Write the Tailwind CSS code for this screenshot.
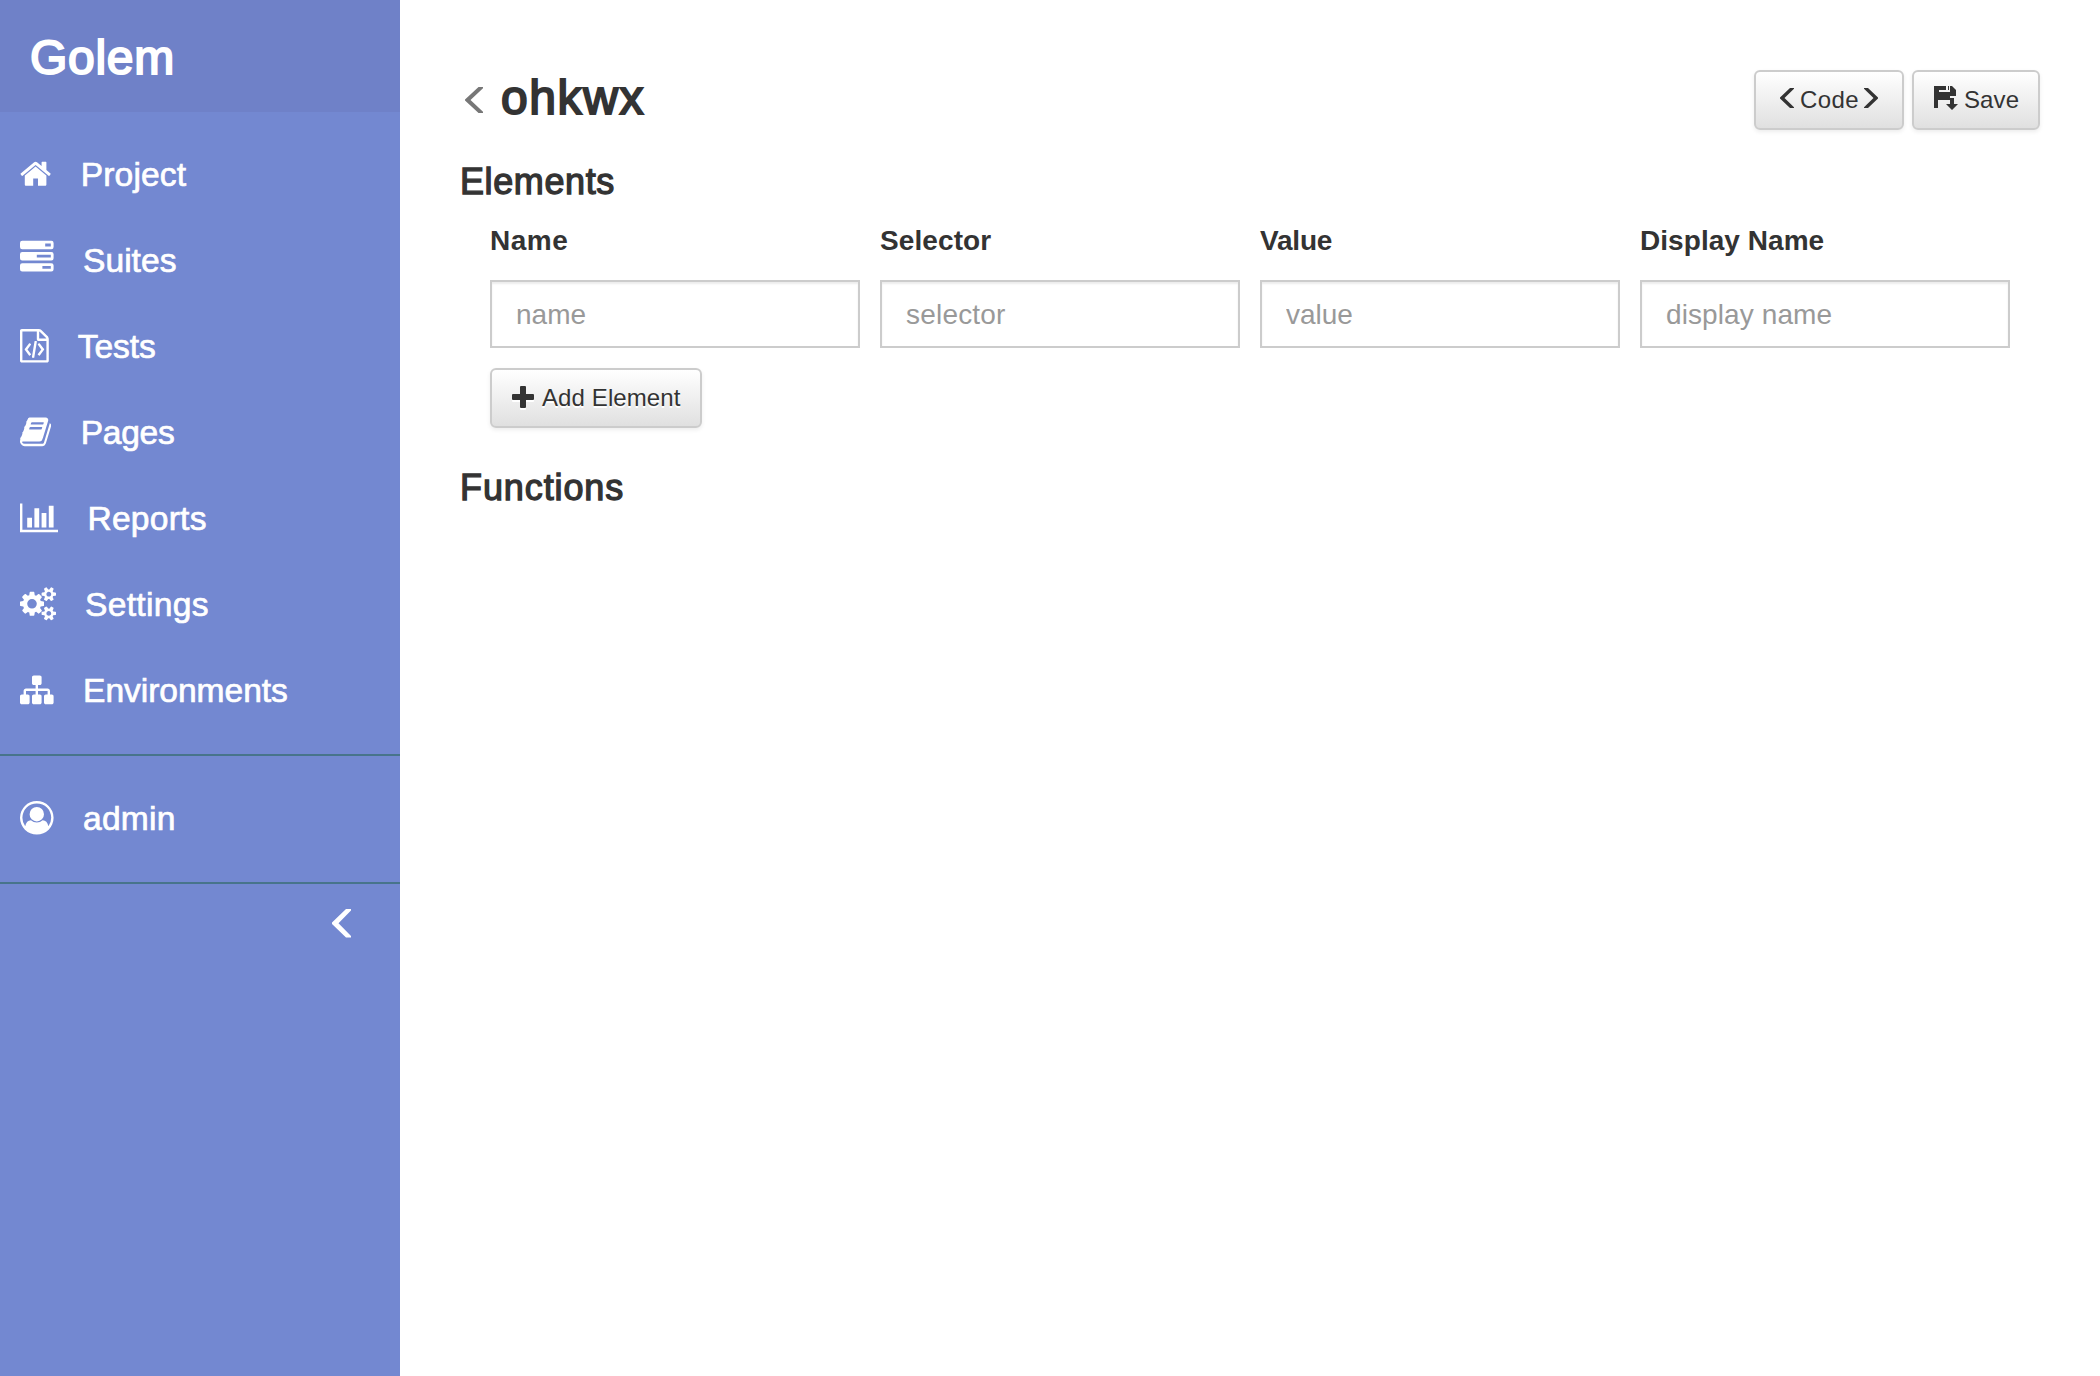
<!DOCTYPE html>
<html lang="en">
<head>
<meta charset="utf-8">
<title>Golem</title>
<script src="https://cdn.jsdelivr.net/npm/@tailwindcss/browser@4"></script>
</head>
<body class="flex h-[1376px] w-[2100px] overflow-hidden bg-white font-['Liberation_Sans',sans-serif] text-[#333]">

<aside class="flex w-[400px] shrink-0 flex-col bg-[#7388d1] text-white">
  <header class="flex h-[112px] items-center bg-[#6f81c8] pt-[3px] pl-[30px]">
    <h3 class="text-[48px] leading-none tracking-[0.7px] [-webkit-text-stroke:2px_white]">Golem</h3>
  </header>

  <nav class="flex flex-col pt-[19px] pb-[21px] pl-[20px] text-[33.6px] leading-none [-webkit-text-stroke:0.7px_white]">
    <a class="flex h-[86px] items-center gap-[29px]">
      <svg class="h-[33.6px] w-[31.2px] fill-current stroke-none" viewBox="64 0 1664 1792"><path d="M1472 992v480q0 26-19 45t-45 19h-384v-384h-256v384h-384q-26 0-45-19t-19-45v-480q0-1 .5-3t.5-3l575-474 575 474q1 2 1 6zm223-69l-62 74q-8 9-21 11h-3q-13 0-21-7l-692-577-692 577q-12 8-24 7-13-2-21-11l-62-74q-8-10-7-23.5t11-21.500l719-599q32-26 76-26t76 26l244 204v-195q0-14 9-23t23-9h192q14 0 23 9t9 23v408l219 182q10 8 11 21.500t-7 23.500z"/></svg>
      <span class="pt-[2px] pl-[0.5px] tracking-[0.15px]">Project</span>
    </a>
    <a class="flex h-[86px] items-center gap-[29px]">
      <svg class="mb-[10px] h-[33.6px] w-[33.6px] fill-current stroke-none" viewBox="0 0 1200 1200"><path fill-rule="evenodd" d="M80 100H1120A80 80 0 0 1 1200 180V320A80 80 0 0 1 1120 400H80A80 80 0 0 1 0 320V180A80 80 0 0 1 80 100ZM900 200V300H1100V200ZM80 500H1120A80 80 0 0 1 1200 580V720A80 80 0 0 1 1120 800H80A80 80 0 0 1 0 720V580A80 80 0 0 1 80 500ZM600 600V700H1100V600ZM80 900H1120A80 80 0 0 1 1200 980V1120A80 80 0 0 1 1120 1200H80A80 80 0 0 1 0 1120V980A80 80 0 0 1 80 900ZM800 1000V1100H1100V1000Z"/></svg>
      <span class="pt-[2px] pl-[0.5px]">Suites</span>
    </a>
    <a class="flex h-[86px] items-center gap-[29px]">
      <svg class="h-[33.6px] w-[28.8px] fill-current stroke-none" viewBox="128 0 1536 1792"><path d="M1596 380q28 28 48 76t20 88v1152q0 40-28 68t-68 28h-1344q-40 0-68-28t-28-68v-1600q0-40 28-68t68-28h896q40 0 88 20t76 48zm-444-244v376h376q-10-29-22-41l-313-313q-12-12-41-22zm384 1528v-1024h-416q-40 0-68-28t-28-68v-416h-768v1536h1280zm-928-896q8-11 21-12.500t24 6.500l51 38q11 8 12.500 21t-6.500 24l-182 243 182 243q8 11 6.500 24t-12.500 21l-51 38q-11 8-24 6.500t-21-12.500l-226-301q-14-19 0-38zm802 301q14 19 0 38l-226 301q-8 11-21 12.500t-24-6.500l-51-38q-11-8-12.500-21t6.500-24l182-243-182-243q-8-11-6.500-24t12.500-21l51-38q11-8 24-6.500t21 12.500zm-620 461q-13-2-20.500-13t-5.500-24l138-831q2-13 13-20.500t24-5.500l63 10q13 2 20.500 13t5.500 24l-138 831q-2 13-13 20.500t-24 5.500z"/></svg>
      <span class="pt-[2px] tracking-[-0.1px]">Tests</span>
    </a>
    <a class="flex h-[86px] items-center gap-[29px]">
      <svg class="h-[33.6px] w-[31.2px] fill-current stroke-none" viewBox="64 0 1664 1792"><path d="M1703 478q40 57 18 129l-275 906q-19 64-76.500 107.500t-122.500 43.500h-923q-77 0-148.500-53.500t-99.500-131.500q-24-67-2-127 0-4 3-27t4-37q1-8-3-21.500t-3-19.500q2-11 8-21t16.500-23.500 16.500-23.500q23-38 45-91.500t30-91.500q3-10 .5-30t-.5-28q3-11 17-28t17-23q21-36 42-92t25-90q1-9-2.500-32t.5-28q4-13 22-30.500t22-22.500q19-26 42.500-84.500t27.500-96.500q1-8-3-25.500t-2-26.500q2-8 9-18t18-23 17-21q8-12 16.500-30.500t15-35 16-36 19.500-32 26.500-23.500 36-11.500 47.500 5.500l-1 3q38-9 51-9h761q74 0 114 56t18 130l-274 906q-36 119-71.500 153.500t-128.500 34.500h-869q-27 0-38 15-11 16-1 43 24 70 144 70h923q29 0 56-15.500t35-41.500l300-987q7-22 5-57 38 15 59 43zm-1064 2q-4 13 2 22.500t20 9.500h608q13 0 25.500-9.500t16.500-22.500l21-64q4-13-2-22.500t-20-9.500h-608q-13 0-25.500 9.500t-16.500 22.500zm-83 256q-4 13 2 22.500t20 9.500h608q13 0 25.500-9.500t16.500-22.500l21-64q4-13-2-22.500t-20-9.500h-608q-13 0-25.500 9.500t-16.500 22.500z"/></svg>
      <span class="pt-[2px] pl-[0.5px] tracking-[-0.3px]">Pages</span>
    </a>
    <a class="flex h-[86px] items-center gap-[29px]">
      <svg class="h-[33.6px] w-[38.4px] fill-current stroke-none" viewBox="0 0 2048 1792"><path d="M640 896v512h-256v-512h256zm384-512v1024h-256v-1024h256zm1024 1152v128h-2048v-1536h128v1408h1920zm-640-896v768h-256v-768h256zm384-384v1152h-256v-1152h256z"/></svg>
      <span class="pt-[2px] tracking-[0.25px]">Reports</span>
    </a>
    <a class="flex h-[86px] items-center gap-[29px]">
      <svg class="h-[33.6px] w-[36px] fill-current stroke-none" viewBox="0 0 1920 1792"><path d="M896 896q0-106-75-181t-181-75-181 75-75 181 75 181 181 75 181-75 75-181zm768 512q0-52-38-90t-90-38-90 38-38 90q0 53 37.500 90.500t90.500 37.500 90.500-37.500 37.500-90.500zm0-1024q0-52-38-90t-90-38-90 38-38 90q0 53 37.500 90.500t90.500 37.500 90.500-37.500 37.500-90.500zm-384 421v185q0 10-7 19.500t-16 10.500l-155 24q-11 35-32 76 34 48 90 115 7 11 7 20 0 12-7 19-23 30-82.500 89.500t-78.500 59.500q-11 0-21-7l-115-90q-37 19-77 31-11 108-23 155-7 24-30 24h-186q-11 0-20-7.500t-10-17.500l-23-153q-34-10-75-31l-118 89q-7 7-20 7-11 0-21-8-144-133-144-160 0-9 7-19 10-14 41-53t47-61q-23-44-35-82l-152-24q-10-1-17-9.500t-7-19.500v-185q0-10 7-19.500t16-10.500l155-24q11-35 32-76-34-48-90-115-7-11-7-20 0-12 7-20 22-30 82-89t79-59q11 0 21 7l115 90q34-18 77-32 11-108 23-154 7-24 30-24h186q11 0 20 7.500t10 17.500l23 153q34 10 75 31l118-89q8-7 20-7 11 0 21 8 144 133 144 160 0 8-7 19-12 16-42 54t-45 60q23 48 34 82l152 23q10 2 17 10.500t7 19.500zm640 533v140q0 16-149 31-12 27-30 52 51 113 51 138 0 4-4 7-122 71-124 71-8 0-46-47t-52-68q-20 2-30 2t-30-2q-14 21-52 68t-46 47q-2 0-124-71-4-3-4-7 0-25 51-138-18-25-30-52-149-15-149-31v-140q0-16 149-31 13-29 30-52-51-113-51-138 0-4 4-7 4-2 35-20t59-34 30-16q8 0 46 46.500t52 67.500q20-2 30-2t30 2q51-71 92-112l6-2q4 0 124 70 4 3 4 7 0 25-51 138 17 23 30 52 149 15 149 31zm0-1024v140q0 16-149 31-12 27-30 52 51 113 51 138 0 4-4 7-122 71-124 71-8 0-46-47t-52-68q-20 2-30 2t-30-2q-14 21-52 68t-46 47q-2 0-124-71-4-3-4-7 0-25 51-138-18-25-30-52-149-15-149-31v-140q0-16 149-31 13-29 30-52-51-113-51-138 0-4 4-7 4-2 35-20t59-34 30-16q8 0 46 46.500t52 67.500q20-2 30-2t30 2q51-71 92-112l6-2q4 0 124 70 4 3 4 7 0 25-51 138 17 23 30 52 149 15 149 31z"/></svg>
      <span class="pt-[2px] tracking-[0.3px]">Settings</span>
    </a>
    <a class="flex h-[86px] items-center gap-[29px]">
      <svg class="h-[33.6px] w-[33.6px] fill-current stroke-none" viewBox="0 0 1792 1792"><path d="M1792 1248v320q0 40-28 68t-68 28h-320q-40 0-68-28t-28-68v-320q0-40 28-68t68-28h96v-192h-512v192h96q40 0 68 28t28 68v320q0 40-28 68t-68 28h-320q-40 0-68-28t-28-68v-320q0-40 28-68t68-28h96v-192h-512v192h96q40 0 68 28t28 68v320q0 40-28 68t-68 28h-320q-40 0-68-28t-28-68v-320q0-40 28-68t68-28h96v-192q0-52 38-90t90-38h512v-192h-96q-40 0-68-28t-28-68v-320q0-40 28-68t68-28h320q40 0 68 28t28 68v320q0 40-28 68t-68 28h-96v192h512q52 0 90 38t38 90v192h96q40 0 68 28t28 68z"/></svg>
      <span class="pt-[2px] pl-[0.5px] tracking-[-0.05px]">Environments</span>
    </a>
  </nav>

  <div class="border-y-2 border-[#47748b] pt-[19px] pb-[21px] pl-[20px] text-[33.6px] leading-none [-webkit-text-stroke:0.7px_white]">
    <a class="flex h-[86px] items-center gap-[29px]">
      <svg class="h-[33.6px] w-[33.6px] fill-current stroke-none" viewBox="0 0 1792 1792"><path d="M896 0q182 0 348 71t286 191 191 286 71 348q0 181-70.500 347t-190.500 286-286 191.500-349 71.500-349-71-285.500-191.500-190.500-286-71-347.500 71-348 191-286 286-191 348-71zm619 1351q149-205 149-455 0-156-61-298t-164-245-245-164-298-61-298 61-245 164-164 245-61 298q0 250 149 455 66-327 306-327 131 128 313 128t313-128q240 0 306 327zm-235-647q0-159-112.500-271.500t-271.500-112.500-271.500 112.500-112.500 271.500 112.500 271.500 271.500 112.500 271.500-112.500 112.500-271.500z"/></svg>
      <span class="pt-[2px] pl-[0.5px] tracking-[0.2px]">admin</span>
    </a>
  </div>

  <div class="flex justify-end pt-[25px] pr-[49px]">
    <svg class="h-[29px] w-[19px] fill-current" viewBox="0 0 19 29"><path d="M14 0H19V1.500L6.500 14.200L19 27V28.500H14L0 15V13.500Z"/></svg>
  </div>
</aside>

<main class="flex flex-1 flex-col pt-[70px] pr-[60px] pl-[60px]">
  <div class="flex h-[60px] justify-between">
    <div class="flex items-center gap-[18px] pl-[5px]">
      <svg class="h-[26px] w-[18px] fill-[#777]" viewBox="0 0 18 26"><path d="M13.500 0H18V1.200L5.500 13L18 24.800V26H13.500L0 13.600V12.400Z"/></svg>
      <h3 class="pb-[5px] text-[48px] leading-none tracking-[1.6px] [-webkit-text-stroke:2px_#333]">ohkwx</h3>
    </div>
    <div class="flex gap-[8px] text-[24px] leading-none [text-shadow:0_2px_0_#fff]">
      <button class="flex w-[150px] items-center rounded-[6px] border-2 border-[#ccc] bg-linear-to-b from-white to-[#e0e0e0] pl-[24px] shadow-[0_2px_4px_rgba(0,0,0,0.075)]">
        <svg class="mb-[4px] h-[20px] w-[14px] fill-[#333]" viewBox="0 0 14 20"><path d="M10 0H14V.8L4.500 10L14 19.200V20H10L0 10.600V9.400Z"/></svg>
        <span class="ml-[6px] w-[64px] text-left tracking-[0.4px]">Code</span>
        <svg class="mb-[4px] h-[20px] w-[14px] fill-[#333]" viewBox="0 0 14 20"><path d="M4 0H0V.8L9.500 10L0 19.200V20H4L14 10.600V9.400Z"/></svg>
      </button>
      <button class="flex w-[128px] items-center rounded-[6px] border-2 border-[#ccc] bg-linear-to-b from-white to-[#e0e0e0] pl-[20px] shadow-[0_2px_4px_rgba(0,0,0,0.075)]">
        <svg class="mb-[4px] h-[24px] w-[24px] fill-[#333]" viewBox="0 0 24 24"><path d="M0 0H5V6H16V0H18L22 4V10H16V14H4V22H0ZM5 0H12V4H5ZM14 0H15V4H14ZM16 12H20V18H24L18 24L12 18H16Z"/></svg>
        <span class="ml-[6px] tracking-[0.1px]">Save</span>
      </button>
    </div>
  </div>

  <h4 class="mt-[34px] text-[36px] leading-[36px] tracking-[0.6px] [-webkit-text-stroke:1.3px_#333]">Elements</h4>

  <section class="grid grid-cols-[370px_360px_360px_370px] gap-x-[20px] pt-[26px] pl-[30px] text-[28px]">
    <div class="flex flex-col gap-[25px]">
      <label class="text-[28px] leading-[29px] font-bold tracking-[0.5px]">Name</label>
      <input class="h-[68px] border-2 border-[#ccc] px-[24px] pt-[2px] shadow-[inset_0_2px_2px_rgba(0,0,0,0.075)] placeholder:text-[#999]" placeholder="name">
    </div>
    <div class="flex flex-col gap-[25px]">
      <label class="text-[28px] leading-[29px] font-bold tracking-[0.1px]">Selector</label>
      <input class="h-[68px] border-2 border-[#ccc] px-[24px] pt-[2px] shadow-[inset_0_2px_2px_rgba(0,0,0,0.075)] placeholder:text-[#999] placeholder:tracking-[0.2px]" placeholder="selector">
    </div>
    <div class="flex flex-col gap-[25px]">
      <label class="text-[28px] leading-[29px] font-bold tracking-[-0.2px]">Value</label>
      <input class="h-[68px] border-2 border-[#ccc] px-[24px] pt-[2px] shadow-[inset_0_2px_2px_rgba(0,0,0,0.075)] placeholder:text-[#999]" placeholder="value">
    </div>
    <div class="flex flex-col gap-[25px]">
      <label class="text-[28px] leading-[29px] font-bold tracking-[0.05px]">Display Name</label>
      <input class="h-[68px] border-2 border-[#ccc] px-[24px] pt-[2px] shadow-[inset_0_2px_2px_rgba(0,0,0,0.075)] placeholder:text-[#999] placeholder:tracking-[0.1px]" placeholder="display name">
    </div>
  </section>

  <button class="mt-[20px] ml-[30px] flex h-[60px] w-[212px] shrink-0 items-center rounded-[6px] border-2 border-[#ccc] bg-linear-to-b from-white to-[#e0e0e0] pl-[20px] text-[24px] leading-none shadow-[0_2px_4px_rgba(0,0,0,0.075)] [text-shadow:0_2px_0_#fff]">
    <svg class="mb-[2px] h-[22px] w-[22px] fill-[#333] drop-shadow-[0_2px_0_#fff]" viewBox="0 0 22 22"><path d="M9 0H13Q14 0 14 1V8H21Q22 8 22 9V13Q22 14 21 14H14V21Q14 22 13 22H9Q8 22 8 21V14H1Q0 14 0 13V9Q0 8 1 8H8V1Q8 0 9 0Z"/></svg>
    <span class="ml-[8px] tracking-[0.1px]">Add Element</span>
  </button>

  <h4 class="mt-[42px] text-[36px] leading-[36px] tracking-[0.9px] [-webkit-text-stroke:1.3px_#333]">Functions</h4>
</main>
</body>
</html>
